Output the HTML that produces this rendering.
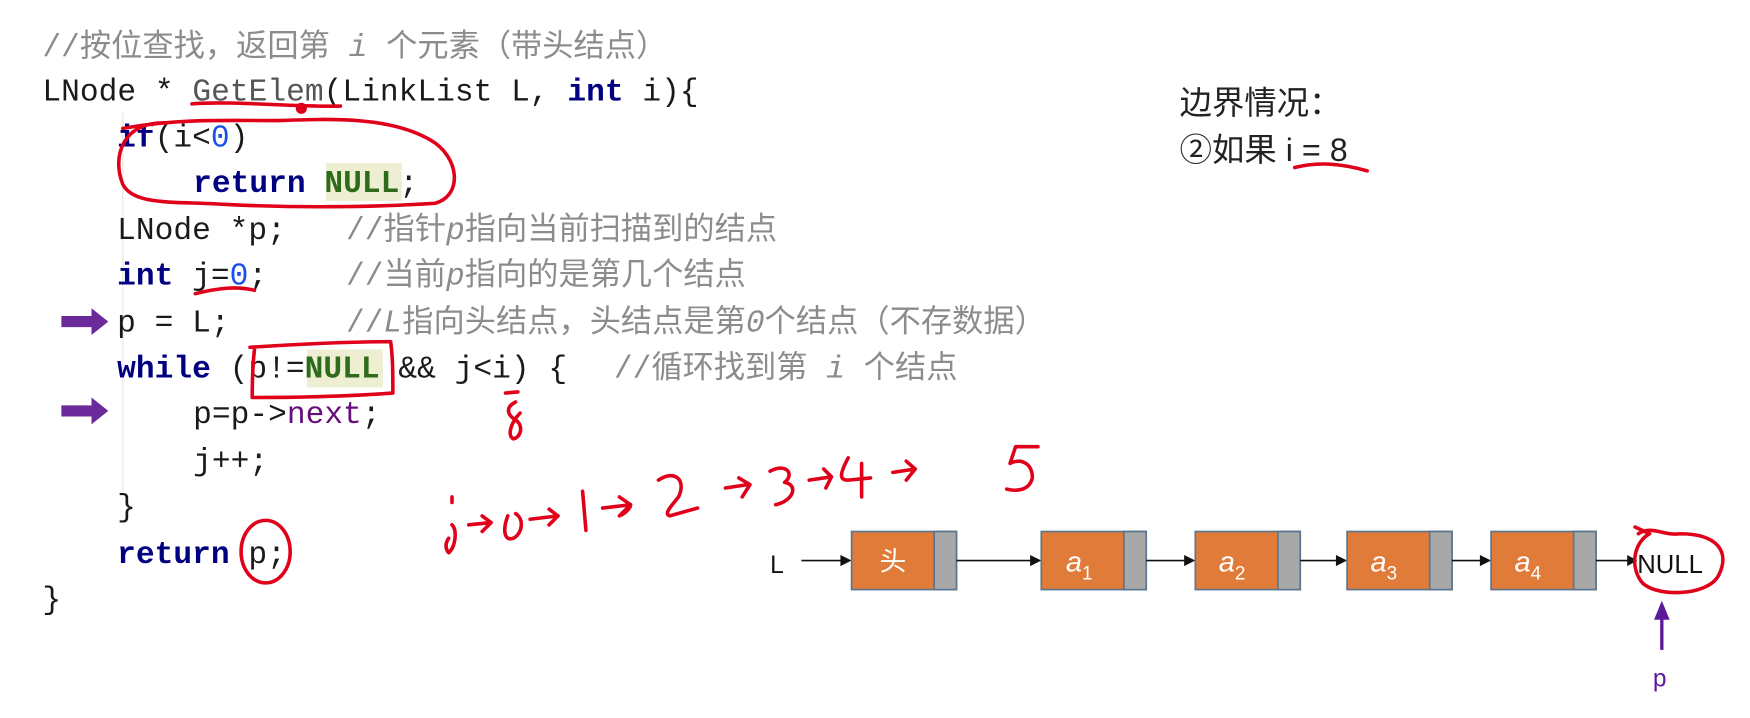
<!DOCTYPE html>
<html><head><meta charset="utf-8"><style>
html,body{margin:0;padding:0;background:#fff;}
svg{display:block;}
.c{font-family:"Liberation Mono","Noto Sans CJK SC",monospace;font-size:28px;fill:#1a1a1a;}
.k{fill:#000080;font-weight:bold;}
.n{fill:#2e6b1a;font-weight:bold;}
.num{fill:#1750eb;}
.cm{fill:#8c8c8c;font-family:"Liberation Mono","Noto Sans CJK SC",monospace;}
.it{font-style:italic;}
.r{fill:none;stroke:#e0001a;stroke-width:3.2;stroke-linecap:round;stroke-linejoin:round;}
.t{font-family:"Liberation Sans","Noto Sans CJK SC",sans-serif;}
</style></head><body>
<svg width="1750" height="718" viewBox="0 0 1568 643" preserveAspectRatio="none" xmlns="http://www.w3.org/2000/svg">
<rect width="1568" height="643" fill="#fff"/>
<rect x="292" y="146" width="68" height="34" fill="#eeeed2"/>
<rect x="275" y="313" width="68" height="34" fill="#eeeed2"/>
<line x1="110" y1="100" x2="110" y2="440" stroke="#ececec" stroke-width="1.5"/>
<g class="c" xml:space="preserve">
<text x="38" y="50" class="cm">//按位查找，返回第 <tspan class="it">i</tspan> 个元素（带头结点）</text>
<text x="38" y="90">LNode * <tspan fill="#555">GetElem</tspan>(LinkList L, <tspan class="k">int</tspan> i){</text>
<text x="105" y="131"><tspan class="k">if</tspan>(i&lt;<tspan class="num">0</tspan>)</text>
<text x="173" y="172"><tspan class="k">return</tspan> <tspan class="n">NULL</tspan>;</text>
<text x="105" y="214">LNode *p;</text>
<text x="310" y="214" class="cm">//指针<tspan class="it">p</tspan>指向当前扫描到的结点</text>
<text x="105" y="255"><tspan class="k">int</tspan> j=<tspan class="num">0</tspan>;</text>
<text x="310" y="255" class="cm">//当前<tspan class="it">p</tspan>指向的是第几个结点</text>
<text x="105" y="297">p = L;</text>
<text x="310" y="297" class="cm">//<tspan class="it">L</tspan>指向头结点，头结点是第<tspan class="it">0</tspan>个结点（不存数据）</text>
<text x="105" y="338"><tspan class="k">while</tspan> (p!=<tspan class="n">NULL</tspan> &amp;&amp; j&lt;i) {</text>
<text x="550" y="338" class="cm">//循环找到第 <tspan class="it">i</tspan> 个结点</text>
<text x="173" y="379">p=p-&gt;<tspan fill="#660e7a">next</tspan>;</text>
<text x="173" y="421">j++;</text>
<text x="105" y="462">}</text>
<text x="105" y="504"><tspan class="k">return</tspan> p;</text>
<text x="38" y="545">}</text>
</g>
<polygon points="55,283 82,283 82,276 97,288 82,300 82,293 55,293" fill="#6a2a9a"/>
<polygon points="55,363 82,363 82,356 97,368 82,380 82,373 55,373" fill="#6a2a9a"/>
<text x="1057" y="102" class="t" font-size="29" fill="#222">边界情况：</text>
<text x="1057" y="144" class="t" font-size="29" fill="#222">②如果 i = 8</text>
<g class="t">
<text x="690" y="513" font-size="22" fill="#111">L</text>
<line x1="718" y1="502" x2="755" y2="502" stroke="#111" stroke-width="1.5"/><polygon points="763,502 753,497 753,507" fill="#111"/>
<rect x="763" y="476" width="94" height="52" fill="#e07b39" stroke="#5a7590" stroke-width="1.5"/><rect x="837" y="476" width="20" height="52" fill="#a8a8a8" stroke="#5a7590" stroke-width="1.5"/>
<text x="800" y="511" font-size="24" fill="#fff" text-anchor="middle">头</text>
<line x1="857" y1="502" x2="925" y2="502" stroke="#111" stroke-width="1.5"/><polygon points="933,502 923,497 923,507" fill="#111"/>
<rect x="933" y="476" width="94" height="52" fill="#e07b39" stroke="#5a7590" stroke-width="1.5"/><rect x="1007" y="476" width="20" height="52" fill="#a8a8a8" stroke="#5a7590" stroke-width="1.5"/>
<text x="955" y="512" font-size="26" fill="#fff" font-style="italic">a<tspan font-size="17" dy="7" font-style="normal">1</tspan></text>
<line x1="1027" y1="502" x2="1063" y2="502" stroke="#111" stroke-width="1.5"/><polygon points="1071,502 1061,497 1061,507" fill="#111"/>
<rect x="1071" y="476" width="94" height="52" fill="#e07b39" stroke="#5a7590" stroke-width="1.5"/><rect x="1145" y="476" width="20" height="52" fill="#a8a8a8" stroke="#5a7590" stroke-width="1.5"/>
<text x="1092" y="512" font-size="26" fill="#fff" font-style="italic">a<tspan font-size="17" dy="7" font-style="normal">2</tspan></text>
<line x1="1165" y1="502" x2="1199" y2="502" stroke="#111" stroke-width="1.5"/><polygon points="1207,502 1197,497 1197,507" fill="#111"/>
<rect x="1207" y="476" width="94" height="52" fill="#e07b39" stroke="#5a7590" stroke-width="1.5"/><rect x="1281" y="476" width="20" height="52" fill="#a8a8a8" stroke="#5a7590" stroke-width="1.5"/>
<text x="1228" y="512" font-size="26" fill="#fff" font-style="italic">a<tspan font-size="17" dy="7" font-style="normal">3</tspan></text>
<line x1="1301" y1="502" x2="1328" y2="502" stroke="#111" stroke-width="1.5"/><polygon points="1336,502 1326,497 1326,507" fill="#111"/>
<rect x="1336" y="476" width="94" height="52" fill="#e07b39" stroke="#5a7590" stroke-width="1.5"/><rect x="1410" y="476" width="20" height="52" fill="#a8a8a8" stroke="#5a7590" stroke-width="1.5"/>
<text x="1357" y="512" font-size="26" fill="#fff" font-style="italic">a<tspan font-size="17" dy="7" font-style="normal">4</tspan></text>
<line x1="1430" y1="502" x2="1460" y2="502" stroke="#111" stroke-width="1.5"/><polygon points="1467,502 1458,497 1458,507" fill="#111"/>
<text x="1467" y="513" font-size="23" fill="#111">NULL</text>
<line x1="1489" y1="552" x2="1489" y2="582" stroke="#5a1a9a" stroke-width="3"/><polygon points="1489,538 1482,555 1496,555" fill="#5a1a9a"/>
<text x="1481" y="615" font-size="22" fill="#5a1a9a">p</text>
</g>
<path class="r" d="M172,93 C210,90 260,96 305,95"/>
<circle cx="270" cy="97" r="5" fill="#e0001a"/>
<path class="r" d="M150,110 C110,108 100,140 110,165 C120,185 160,180 200,183 C260,186 330,186 390,182 C415,175 412,140 385,125 C350,105 300,106 250,108 C200,108 160,106 110,115"/>
<path class="r" d="M175,263 C195,258 212,256 228,260"/>
<path class="r" d="M228,313 C226,330 226,345 226,356 C260,356 310,355 352,352 M224,311 C270,308 320,306 350,306 C352,320 352,335 352,352"/>
<path class="r" d="M453,352 L464,351 M462,360 C452,365 455,372 462,376 C470,382 466,392 460,393 C454,390 458,378 466,370"/>
<ellipse class="r" cx="238" cy="494" rx="22" ry="28"/>
<path class="r" d="M1160,150 C1180,145 1200,146 1225,153"/>
<path class="r" d="M1468,478 C1480,470 1490,480 1505,478 C1540,478 1550,495 1540,515 C1530,535 1480,535 1470,520 C1460,505 1465,485 1478,478 L1465,472"/>
<g class="r">
<path d="M405,470 C410,475 408,490 402,495 C398,490 400,485 402,482 M405,445 L405,450"/>
<path d="M420,470 L440,468 M432,462 L440,468 L432,476"/>
<path d="M455,462 C450,475 452,485 460,482 C468,478 470,465 462,460"/>
<path d="M475,465 L500,462 M492,456 L500,462 L492,470"/>
<path d="M522,440 L525,475"/>
<path d="M540,455 L565,452 M555,445 L565,452 L555,462 C560,460 565,455 565,452"/>
<path d="M590,430 C605,420 615,430 608,445 C600,455 595,460 600,462 L625,455"/>
<path d="M650,437 L670,434 M662,428 L672,434 L665,445"/>
<path d="M690,422 C705,414 712,425 703,432 C715,434 712,448 695,452"/>
<path d="M725,430 L745,427 M738,420 L745,427 L740,437"/>
<path d="M760,410 C752,425 752,430 760,430 L780,428 M772,415 L772,445"/>
<path d="M800,423 L820,420 M812,413 L820,420 L812,430"/>
<path d="M930,400 L910,400 L905,415 C915,410 925,415 925,428 C922,440 910,440 902,438"/>
</g>
</svg>
</body></html>
